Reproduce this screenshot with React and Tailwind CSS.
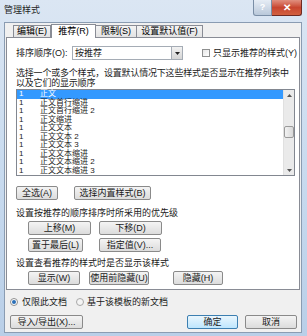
import React from "react";

const font = { fontFamily: '"Liberation Sans", "Noto Sans CJK SC", sans-serif' };

const rows = [
  "正文",
  "正文首行缩进",
  "正文首行缩进 2",
  "正文缩进",
  "正文文本",
  "正文文本 2",
  "正文文本 3",
  "正文文本缩进",
  "正文文本缩进 2",
  "正文文本缩进 3",
];

function Btn({ w, children, def }) {
  return (
    <div
      className={`h-[14px] ${w} flex items-center justify-center rounded-[2px] border text-[9px] leading-none text-[#1a1a1a] ${
        def
          ? "border-[#3c7fb1] bg-gradient-to-b from-[#eaf6fd] to-[#bee6fd]"
          : "border-[#8a8a8a] bg-gradient-to-b from-[#f4f4f4] to-[#dcdcdc]"
      }`}
    >
      {children}
    </div>
  );
}

export default function App() {
  return (
    <div
      className="w-[307px] h-[336px] overflow-hidden flex flex-col bg-gradient-to-b from-[#dbe6f3] via-[#c9dbef] to-[#b9cfe8]"
      style={font}
    >
      {/* title bar */}
      <div className="h-[22px] flex items-start">
        <span className="pl-[4px] pt-[6px] text-[9px] leading-none text-[#1e1e1e]">管理样式</span>
        <div className="ml-auto mr-[5px] flex">
          <div className="w-[19px] h-[16px] rounded-bl-[3px] border border-t-0 border-[#7a8ea6] bg-gradient-to-b from-[#e6edf5] to-[#b9c8da] flex items-center justify-center text-[9px] font-bold text-white leading-none">
            ?
          </div>
          <div className="w-[30px] h-[16px] rounded-br-[3px] border border-t-0 border-l-0 border-[#6e2a22] bg-gradient-to-b from-[#e08f7f] via-[#c8452f] to-[#d2603f] flex items-center justify-center text-[10px] font-bold text-white leading-none">
            ✕
          </div>
        </div>
      </div>

      {/* body */}
      <div className="flex-1 ml-[4px] mr-[5px] mb-[3px] bg-[#f0f0f0] border border-[#8a9cb2] flex flex-col">
        {/* tabs */}
        <div className="h-[14px] pl-[8px] flex items-end">
          <div className="w-[38px] h-[12px] border border-b-0 border-[#898c95] bg-gradient-to-b from-[#f3f3f3] to-[#e3e3e3] text-[9px] leading-[11px] text-center">编辑(E)</div>
          <div className="w-[45px] h-[14px] -mb-px z-10 border border-b-0 border-[#898c95] bg-white text-[9px] leading-[13px] text-center">推荐(R)</div>
          <div className="w-[41px] h-[12px] border border-b-0 border-l-0 border-[#898c95] bg-gradient-to-b from-[#f3f3f3] to-[#e3e3e3] text-[9px] leading-[11px] text-center">限制(S)</div>
          <div className="w-[66px] h-[12px] border border-b-0 border-l-0 border-[#898c95] bg-gradient-to-b from-[#f3f3f3] to-[#e3e3e3] text-[9px] leading-[11px] text-center">设置默认值(F)</div>
        </div>

        {/* panel */}
        <div className="h-[253px] mx-[1px] border border-[#898c95] bg-white flex flex-col pl-[9px] text-[9px] text-[#1a1a1a]">
          <div className="mt-[8px] h-[14px] flex items-center">
            <span className="w-[56px] leading-none">排序顺序(O):</span>
            <div className="w-[111px] h-[14px] border border-[#a5acb5] flex items-center">
              <span className="pl-[2px] flex-1 leading-none">按推荐</span>
              <div className="w-[11px] h-[12px] border-l border-[#a5acb5] bg-gradient-to-b from-[#f2f2f2] to-[#d5d5d5] flex items-center justify-center">
                <svg width="5" height="3" viewBox="0 0 5 3"><path d="M0 0h5L2.5 3z" fill="#222" /></svg>
              </div>
            </div>
            <div className="ml-[19px] w-[8px] h-[8px] border border-[#8e8f8f] bg-gradient-to-br from-[#e6e6e6] to-white" />
            <span className="ml-[3px] leading-none">只显示推荐的样式(Y)</span>
          </div>

          <div className="mt-[8px] w-[280px] leading-[10px] tracking-[-0.2px]">
            选择一个或多个样式，设置默认情况下这些样式是否显示在推荐列表中以及它们的显示顺序
          </div>

          {/* list */}
          <div className="mt-[1px] w-[279px] h-[87px] border border-[#828790] flex">
            <div className="flex-1 flex flex-col text-[8px]">
              {rows.map((r, i) => (
                <div
                  key={r}
                  className={`h-[8.5px] flex items-center leading-none ${
                    i === 0 ? "bg-[#3399ff] text-white" : ""
                  }`}
                >
                  <span className="w-[23px] pl-[2px]">1</span>
                  <span>{r}</span>
                </div>
              ))}
            </div>
            <div className="w-[11px] bg-[#eaeaea] border-l border-[#e0e0e0] flex flex-col items-center">
              <div className="h-[10px] flex items-center">
                <svg width="5" height="3" viewBox="0 0 5 3"><path d="M0 3h5L2.5 0z" fill="#555" /></svg>
              </div>
              <div className="mt-[26px] w-[10px] h-[12px] rounded-[2px] border border-[#9a9a9a] bg-gradient-to-r from-[#f2f2f2] to-[#d8d8d8]" />
              <div className="mt-auto h-[10px] flex items-center">
                <svg width="5" height="3" viewBox="0 0 5 3"><path d="M0 0h5L2.5 3z" fill="#555" /></svg>
              </div>
            </div>
          </div>

          <div className="mt-[10px] flex gap-[16px]">
            <Btn w="w-[42px]">全选(A)</Btn>
            <Btn w="w-[77px]">选择内置样式(B)</Btn>
          </div>

          <div className="mt-[9px] leading-none">设置按推荐的顺序排序时所采用的优先级</div>
          <div className="mt-[3px] ml-[12px] flex gap-[8px]">
            <Btn w="w-[63px]">上移(M)</Btn>
            <Btn w="w-[63px]">下移(D)</Btn>
          </div>
          <div className="mt-[3px] ml-[12px] flex gap-[16px]">
            <Btn w="w-[55px]">置于最后(L)</Btn>
            <Btn w="w-[62px]">指定值(V)...</Btn>
          </div>

          <div className="mt-[7px] leading-none">设置查看推荐的样式时是否显示该样式</div>
          <div className="mt-[3px] ml-[12px] flex gap-[9px]">
            <Btn w="w-[52px]">显示(W)</Btn>
            <Btn w="w-[60px]">使用前隐藏(U)</Btn>
            <div className="w-[6px]" />
            <Btn w="w-[50px]">隐藏(H)</Btn>
          </div>
        </div>

        {/* radios */}
        <div className="mt-[6px] h-[12px] pl-[5px] flex items-center text-[9px] leading-none text-[#1a1a1a]">
          <div className="w-[8px] h-[8px] rounded-full border border-[#8e8f8f] bg-white flex items-center justify-center">
            <div className="w-[4px] h-[4px] rounded-full bg-[#2a6fb8]" />
          </div>
          <span className="ml-[4px]">仅限此文档</span>
          <div className="ml-[9px] w-[8px] h-[8px] rounded-full border border-[#a8a8a8] bg-[#f4f4f4]" />
          <span className="ml-[3px]">基于该模板的新文档</span>
        </div>

        {/* bottom buttons */}
        <div className="mt-[7px] pl-[5px] pr-[4px] flex">
          <Btn w="w-[73px]">导入/导出(X)...</Btn>
          <div className="ml-auto flex gap-[7px]">
            <Btn w="w-[51px]" def>确定</Btn>
            <Btn w="w-[52px]">取消</Btn>
          </div>
        </div>
      </div>
    </div>
  );
}
